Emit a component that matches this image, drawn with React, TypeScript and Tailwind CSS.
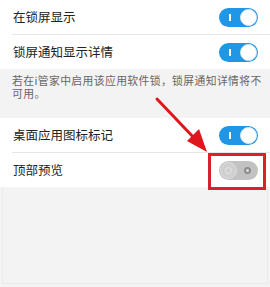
import React from "react";

const font = { fontFamily: '"Noto Sans CJK SC", "Noto Sans", sans-serif' };

function OnToggle() {
  return (
    <div className="relative flex h-[19px] w-[39px] items-center rounded-full bg-[#1f97e6]">
      <div className="absolute left-[10px] top-[6px] h-[7px] w-[2px] bg-white" />
      <div className="absolute right-[1px] top-[1px] h-[17px] w-[17px] rounded-full border border-[#d8e6ef] bg-white" />
    </div>
  );
}

function OffToggle() {
  return (
    <div className="relative flex h-[19px] w-[39px] items-center rounded-full bg-[#c2c2c2]">
      <div className="absolute left-[1px] top-[1px] h-[17px] w-[17px] rounded-full border border-[#dedede] bg-[#cfcfcf]" />
      <div className="absolute left-[6px] top-[6px] h-[7px] w-[7px] rounded-full border border-[#e6e6e6]" />
      <div className="absolute right-[7px] top-[6px] h-[7px] w-[7px] rounded-full border-[2px] border-[#8c8c8c] bg-[#dcdcdc]" />
    </div>
  );
}

function Row({ label, on, divider }: { label: string; on: boolean; divider?: boolean }) {
  return (
    <div className="flex flex-col bg-white">
      <div className="flex h-[34px] items-center justify-between pl-[13px] pr-[12px]">
        <span className="text-[12.5px] leading-none text-[#222]">{label}</span>
        {on ? <OnToggle /> : <OffToggle />}
      </div>
      {divider && <div className="ml-[12px] h-px bg-[#e6e6e6]" />}
    </div>
  );
}

export default function App() {
  return (
    <div className="relative flex h-[287px] w-[270px] flex-col overflow-hidden bg-[#f3f3f3]" style={font}>
      <Row label="在锁屏显示" on divider />
      <Row label="锁屏通知显示详情" on />
      <div className="h-[49px] pl-[12px] pr-[6px] pt-[5px] text-[10.8px] leading-[13px] tracking-[0.4px] text-[#666]">
        若在i管家中启用该应用软件锁，锁屏通知详情将不可用。
      </div>
      <Row label="桌面应用图标标记" on divider />
      <Row label="顶部预览" on={false} />
      <div className="mx-[2px] mb-[3px] flex-1 border-x border-b border-[#ebebeb]" />

      {/* red highlight box */}
      <div className="absolute left-[208px] top-[153px] h-[37px] w-[58px] border-[3px] border-[#d8222a]" />

      {/* red arrow */}
      <svg className="absolute left-0 top-0" width="270" height="287" viewBox="0 0 270 287">
        <line x1="157" y1="99" x2="196" y2="140" stroke="#e0161d" strokeWidth="3" strokeLinecap="round" />
        <polygon points="207,152 187,141 199,129" fill="#e0161d" />
      </svg>
    </div>
  );
}
